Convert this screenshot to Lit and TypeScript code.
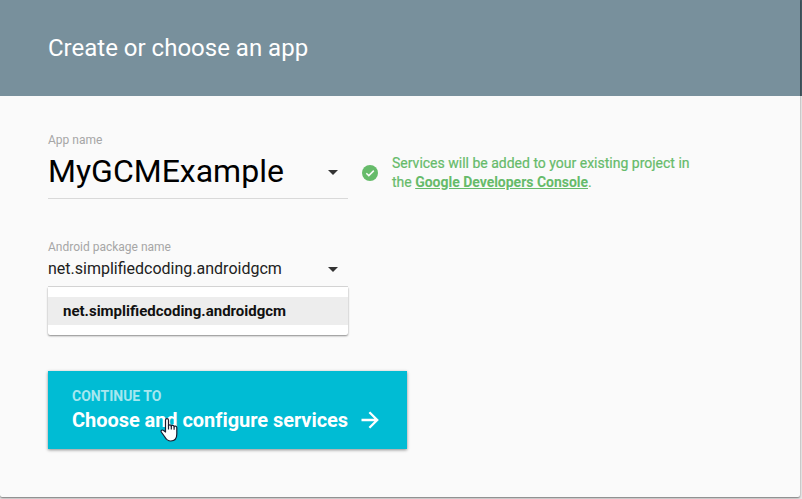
import { LitElement, html, css } from "lit";
import { customElement, property } from "lit/decorators.js";

@customElement("select-field")
class SelectField extends LitElement {
  @property() label = "";
  @property() value = "";
  @property({ type: Boolean, reflect: true }) large = false;
  @property({ type: Array }) options: string[] = [];

  static styles = css`
    :host { display: block; position: relative; width: 300px; color: #212121; }
    .label { font-size: 12px; line-height: 16px; color: #a6a6a6; }
    .row {
      display: flex; align-items: center; justify-content: space-between;
      box-sizing: border-box; height: 32px; padding: 0 10px 3px 0;
      font-size: 16px; border-bottom: 1px solid #d9d9d9;
    }
    .value { padding-bottom: 1px; }
    :host([large]) .row { height: 51px; padding-bottom: 3px; font-size: 32px; color: #000; }
    :host([large]) .value { padding-bottom: 2px; }
    :host([large]) .arrow { margin-top: 2px; }
    .arrow { width: 10px; height: 5px; fill: #333; }
    .menu {
      position: absolute; top: 100%; left: 0; right: 0; padding: 10px 0;
      background: #fff; border-radius: 0 0 2px 2px;
      box-shadow: 0 1px 2px rgba(0, 0, 0, 0.45);
    }
    .option {
      height: 28px; line-height: 28px; padding-left: 15px;
      background: #ededed; font-size: 15px; font-weight: 700; color: #111;
    }
  `;

  render() {
    return html`
      <div class="label">${this.label}</div>
      <div class="row">
        <span class="value">${this.value}</span>
        <svg class="arrow" viewBox="0 0 10 5"><path d="M0 0h10L5 5z" /></svg>
      </div>
      ${this.options.length
        ? html`<div class="menu">${this.options.map((o) => html`<div class="option">${o}</div>`)}</div>`
        : null}
    `;
  }
}

@customElement("app-root")
class AppRoot extends LitElement {
  static styles = css`
    :host {
      display: block; position: relative; width: 802px; height: 499px; overflow: hidden;
      background: linear-gradient(#455a64 96px, #e8e8e8 96px);
      font-family: Roboto, "Liberation Sans", sans-serif;
    }
    .card {
      width: 800px; height: 497px; background: #fafafa; overflow: hidden;
      border-radius: 0 0 2px 2px; box-shadow: 0 1px 2px rgba(0, 0, 0, 0.5);
    }
    .header {
      display: flex; align-items: center; height: 96px; padding-left: 48px;
      background: #78909c; color: #fff; font-size: 24px;
    }
    .body { padding: 36px 48px 0; }
    .project { display: flex; align-items: flex-start; height: 107px; }
    .status { display: flex; align-items: center; gap: 14px; margin: 22px 0 0 14px; }
    .check { width: 16px; height: 16px; }
    .note { font-size: 14px; line-height: 19px; color: #66bb6a; white-space: nowrap; -webkit-text-stroke: 0.2px #66bb6a; }
    .link { font-weight: 700; color: inherit; text-decoration: underline; letter-spacing: -0.02px; -webkit-text-stroke: 0; }
    .continue {
      display: flex; flex-direction: column; box-sizing: border-box;
      width: 359px; height: 78px; margin-top: 84px; padding: 16px 24px 0;
      background: #00bcd4; color: #fff;
      box-shadow: 0 1px 3px rgba(0, 0, 0, 0.45);
    }
    .kicker { font-size: 14px; line-height: 19px; font-weight: 700; color: #a6e7ef; }
    .action { display: flex; align-items: center; gap: 13px; font-size: 20px; line-height: 29px; font-weight: 700; white-space: nowrap; letter-spacing: -0.05px; }
    .forward { width: 18px; height: 18px; margin-bottom: 2px; }
    .pointer { position: absolute; left: 160px; top: 417px; width: 18px; height: 25px; }
  `;

  render() {
    return html`
      <div class="card">
        <div class="header">Create or choose an app</div>
        <div class="body">
          <div class="project">
            <select-field large label="App name" value="MyGCMExample"></select-field>
            <div class="status">
              <svg class="check" viewBox="0 0 16 16">
                <circle cx="8" cy="8" r="8" fill="#66bb6a" />
                <path d="M4.3 8.2l2.5 2.4 5-5" fill="none" stroke="#fafafa" stroke-width="1.5" />
              </svg>
              <div class="note">
                Services will be added to your existing project in<br />the
                <a class="link">Google Developers Console</a>.
              </div>
            </div>
          </div>
          <select-field
            label="Android package name"
            value="net.simplifiedcoding.androidgcm"
            .options=${["net.simplifiedcoding.androidgcm"]}
          ></select-field>
          <div class="continue">
            <div class="kicker">CONTINUE TO</div>
            <div class="action">
              <span>Choose and configure services</span>
              <svg class="forward" viewBox="0 0 18 18" fill="none" stroke="#fff" stroke-width="2.3">
                <path d="M0.5 9h16M8.4 1.2L16.2 9l-7.8 7.8" />
              </svg>
            </div>
          </div>
        </div>
      </div>
      <svg class="pointer" viewBox="0 0 18 25">
        <path
          d="M5.5 15V3.2c0-2.2 3-2.2 3 0V9c0-1.5 2.8-1.5 2.8.3 0-1.3 2.8-1.3 2.8.5 0-1.2 2.7-1 2.7.8V17c0 4-2 7-6 7-3.5 0-4.7-1.5-6.3-4.5L1.3 15c-.8-1.6 1-2.7 2.3-1.4z"
          fill="#fff" stroke="#1c1c30" stroke-width="1.2" stroke-linejoin="round" />
        <path d="M8.5 8.5v4M11.3 9v3.5M14.1 9.8v3" fill="none" stroke="#1c1c30" stroke-width="1.2" />
      </svg>
    `;
  }
}
